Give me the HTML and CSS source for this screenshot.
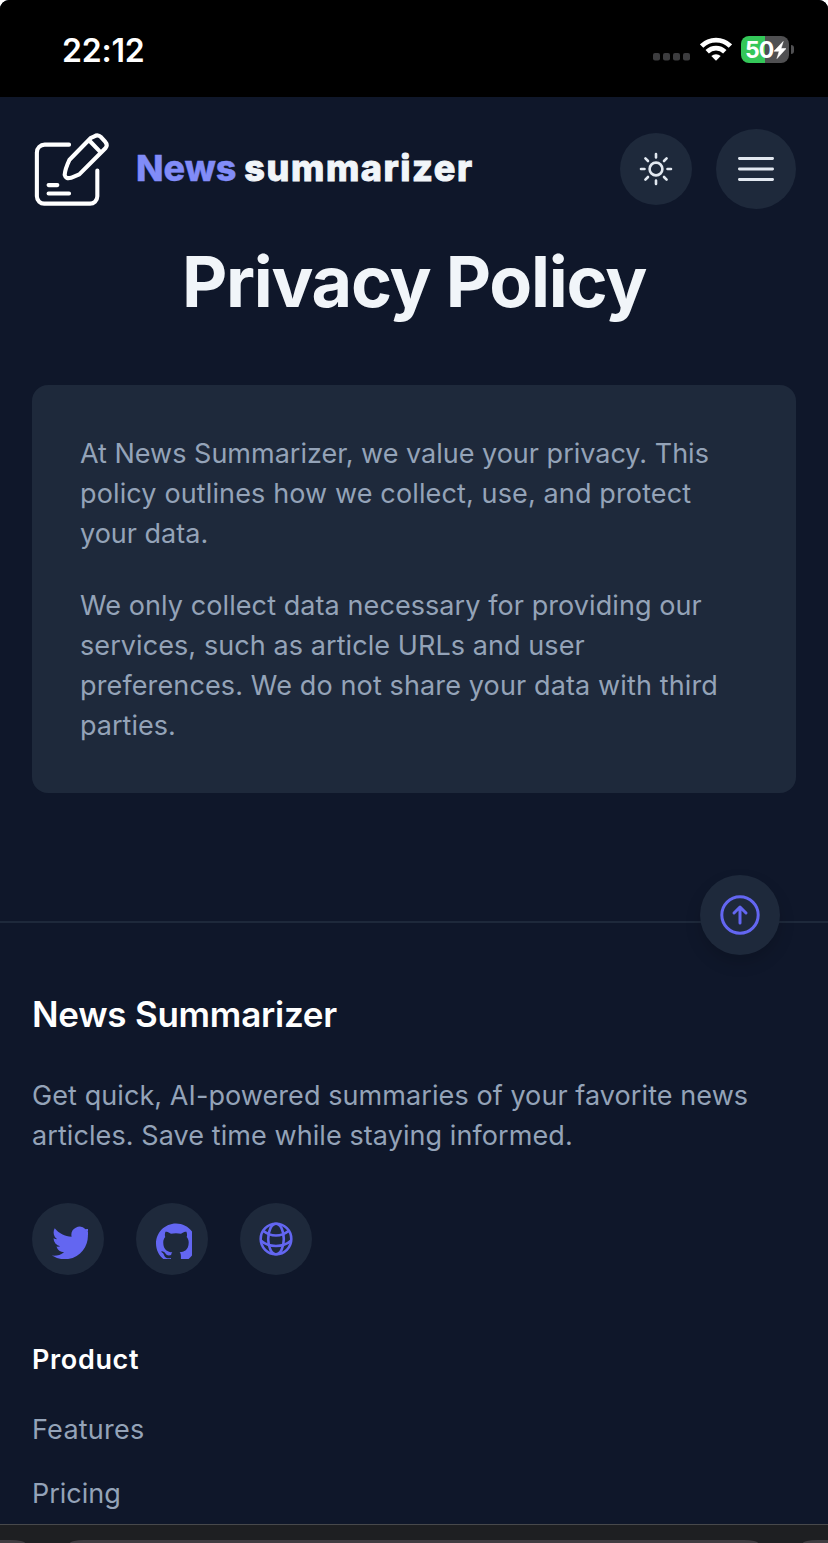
FILE: index.html
```html
<!DOCTYPE html>
<html lang="en">
<head>
<meta charset="utf-8">
<title>Privacy Policy - News Summarizer</title>
<link rel="stylesheet" href="styles.css">
</head>
<body>
<div class="screen">
  <div class="status">
    <span class="time">22:12</span>
    <svg class="signal" viewBox="0 0 38 8" width="38" height="8"><g fill="#3c3c3e"><rect x="0" y="0" width="7" height="7.4" rx="2"/><rect x="10" y="0" width="7" height="7.4" rx="2"/><rect x="20" y="0" width="7" height="7.4" rx="2"/><rect x="30" y="0" width="7" height="7.4" rx="2"/></g></svg>
    <svg class="wifi" viewBox="0 0 32 24" width="32" height="24"><g fill="none" stroke="#fff" stroke-width="4.8"><path d="M1.6 9a20.4 20.4 0 0 1 28.8 0"/><path d="M7.2 14.8a12.6 12.6 0 0 1 17.6 0"/></g><path d="M11.300 19a7 7 0 0 1 9.400 0L16 23.800z" fill="#fff"/></svg>
    <div class="battery"><span class="charge">50</span><svg viewBox="0 0 12 18" width="12" height="18"><path d="M9.200 0.500 0 10.200h5.200L3 17.500 12 7.600H7z" fill="#fff" stroke="#fff" stroke-width=".6"/></svg></div>
    <span class="nub"></span>
  </div>

  <header class="header">
    <svg class="logo" viewBox="0 0 80 80" width="78" height="78" fill="none" stroke="#fff" stroke-width="4.200" stroke-linecap="round" stroke-linejoin="round">
      <path d="M38 15H13a8 8 0 0 0-8 8v45a7.500 7.500 0 0 0 8 7.500h46a7.500 7.500 0 0 0 8-7.500V41.500"/>
      <path d="M17 56.500h9M17 65.200h21"/>
      <path d="M60.500 8 38.500 30.500Q34 40 33.500 46Q34.500 50.500 40 49L48.500 45.500 75.500 18.500Q78 15.500 75 12L71 7.500Q67.500 4 64 6.500L60.500 8ZM59 11l10.500 11"/>
    </svg>
    <div class="brand"><span class="accent">News</span> <span class="rest">summarizer</span></div>
    <button class="round theme" aria-label="Theme"><svg viewBox="-18 -18 36 36" width="36" height="36" fill="none" stroke="#e2e8f0" stroke-width="2.600" stroke-linecap="round"><circle r="6.400"/><path d="M0-15v3.500M0 11.500V15M-15 0h3.500M11.500 0H15M-10.600-10.600l2.600 2.600M8 8l2.600 2.600M-10.600 10.600l2.600-2.600M8-8l2.600-2.600"/></svg></button>
    <button class="round menu" aria-label="Menu"><svg viewBox="0 0 40 40" width="40" height="40" stroke="#e2e8f0" stroke-width="2.800" stroke-linecap="round"><path d="M3.400 9.500h33.200M3.400 20h33.200M3.400 30.500h33.200"/></svg></button>
  </header>

  <main class="main">
    <h1 class="title">Privacy Policy</h1>
    <section class="card">
      <p>At News Summarizer, we value your privacy. This<br><span class="loose">policy outlines how we collect, use, and protect</span><br>your data.</p>
      <p><span class="wide">We only collect data necessary for providing our</span><br><span class="wide">services, such as article URLs and user</span><br><span class="loose">preferences. We do not share your data with third</span><br>parties.</p>
    </section>
  </main>

  <footer class="footer">
    <button class="to-top" aria-label="Back to top"><svg viewBox="-20 -20 40 40" width="40" height="40" fill="none" stroke="#6366f1" stroke-width="3" stroke-linecap="round" stroke-linejoin="round"><circle r="18.200"/><path d="M0 8V-8M-6-2l6-6 6 6"/></svg></button>
    <h2 class="name">News Summarizer</h2>
    <p class="blurb"><span class="wide">Get quick, AI-powered summaries of your favorite news</span><br><span class="wide">articles. Save time while staying informed.</span></p>
    <div class="social">
      <a class="link bottomed"><svg viewBox="0 0 21.600 21.600" width="36" height="36" fill="#6366f1"><path d="M23.953 4.570a10 10 0 01-2.825.775 4.958 4.958 0 002.163-2.723c-.951.555-2.005.959-3.127 1.184a4.920 4.920 0 00-8.384 4.482C7.690 8.095 4.067 6.130 1.640 3.162a4.822 4.822 0 00-.666 2.475c0 1.710.870 3.213 2.188 4.096a4.904 4.904 0 01-2.228-.616v.060a4.923 4.923 0 003.946 4.827 4.996 4.996 0 01-2.212.085 4.936 4.936 0 004.604 3.417 9.867 9.867 0 01-6.102 2.105c-.390 0-.779-.023-1.170-.067a13.995 13.995 0 007.557 2.209c9.053 0 13.998-7.496 13.998-13.985 0-.210 0-.420-.015-.630A9.935 9.935 0 0024 4.590z"/></svg></a>
      <a class="link bottomed"><svg viewBox="0 0 21.600 21.600" width="36" height="36" fill="#6366f1"><path d="M12 .297c-6.630 0-12 5.373-12 12 0 5.303 3.438 9.800 8.205 11.385.600.113.820-.258.820-.577 0-.285-.010-1.040-.015-2.040-3.338.724-4.042-1.610-4.042-1.610C4.422 18.070 3.633 17.700 3.633 17.700c-1.087-.744.084-.729.084-.729 1.205.084 1.838 1.236 1.838 1.236 1.070 1.835 2.809 1.305 3.495.998.108-.776.417-1.305.760-1.605-2.665-.300-5.466-1.332-5.466-5.930 0-1.310.465-2.380 1.235-3.220-.135-.303-.540-1.523.105-3.176 0 0 1.005-.322 3.300 1.230.960-.267 1.980-.399 3-.405 1.020.006 2.040.138 3 .405 2.280-1.552 3.285-1.230 3.285-1.230.645 1.653.240 2.873.120 3.176.765.840 1.230 1.910 1.230 3.220 0 4.610-2.805 5.625-5.475 5.920.420.360.810 1.096.810 2.220 0 1.606-.015 2.896-.015 3.286 0 .315.210.690.825.570C20.565 22.092 24 17.592 24 12.297c0-6.627-5.373-12-12-12"/></svg></a>
      <a class="link"><svg viewBox="-20 -20 40 40" width="40" height="40" fill="none" stroke="#6366f1" stroke-width="2.600"><circle r="15.300"/><ellipse rx="7.800" ry="15.300"/><path d="M-12.500-8Q-7-3.500 0-3.500T12.500-8M-15.300 1.500Q-9 7 0 7T15.300 1.500"/></svg></a>
    </div>
    <h3 class="group">Product</h3>
    <ul class="links"><li class="features">Features</li><li>Pricing</li></ul>
  </footer>

  <div class="browser"><div class="tabs"><span></span><span></span><span></span></div></div>
</div>
</body>
</html>
```
FILE: styles.css
```css
* { box-sizing: border-box; margin: 0; padding: 0; }
body { background: #fff; font-family: Inter, "Open Sans", sans-serif; }
button { border: 0; }
svg { display: block; flex: none; }
.screen { height: 1543px; display: flex; flex-direction: column; background: #0f172a; border-radius: 9px 9px 0 0; overflow: hidden; }
.status { height: 97px; flex: none; display: flex; align-items: center; background: #000; padding: 2px 34px 0 62px; color: #fff; }
.time { font-size: 32px; font-weight: 600; margin-right: auto; letter-spacing: -0.2px; padding-top: 1px; }
.signal { margin: 15px 9px 0 0; }
.wifi { margin: 0 9px 1px 0; }
.battery { width: 48px; height: 27px; border-radius: 8px; background: linear-gradient(90deg, #34c759 50%, #505052 50%); display: flex; align-items: center; gap: 1px; padding-left: 4px; }
.charge { width: 28px; font-size: 23px; font-weight: 700; line-height: 27px; letter-spacing: -1px; padding-top: 1px; }
.nub { width: 3px; height: 9px; background: #505052; border-radius: 0 4px 4px 0; margin-left: 2px; }
.header { height: 144px; flex: none; padding: 0 32px; display: flex; align-items: center; }
.logo { margin-right: 26px; }
.brand { font-size: 36px; font-weight: 800; margin-right: auto; line-height: 54px; padding-bottom: 2px; white-space: nowrap; }
.accent { color: #818cf8; -webkit-text-stroke: 0.4px #818cf8; }
.rest { color: #f1f5f9; letter-spacing: 1.55px; -webkit-text-stroke: 0.9px #f1f5f9; }
.round { border-radius: 50%; background: #1e293b; display: flex; align-items: center; justify-content: center; flex: none; }
.theme { width: 72px; height: 72px; margin-right: 24px; }
.menu { width: 80px; height: 80px; }
.main { padding: 0 32px; height: 680px; flex: none; }
.title { height: 144px; text-align: center; color: #f1f5f9; font-size: 70px; line-height: 82px; font-weight: 700; letter-spacing: -1.25px; white-space: nowrap; }
.card { background: #1e293b; border-radius: 16px; padding: 49px 48px 47px; height: 408px; display: flex; flex-direction: column; gap: 32px; }
.card p, .blurb { color: #94a3b8; font-size: 27px; line-height: 40px; white-space: nowrap; }
.wide { letter-spacing: 0.08px; }
.loose { letter-spacing: 0.13px; }
.footer { position: relative; border-top: 2px solid #1e293b; height: 603px; flex: none; padding: 63px 32px 0; }
.to-top { position: absolute; top: -48px; right: 48px; width: 80px; height: 80px; border-radius: 50%; background: #1e293b; display: flex; align-items: center; justify-content: center; box-shadow: 0 8px 16px rgba(0, 0, 0, .15); }
.name { color: #fff; font-size: 35px; line-height: 56px; font-weight: 600; letter-spacing: -0.25px; }
.blurb { margin-top: 34px; }
.social { display: flex; gap: 32px; margin-top: 47px; }
.link { width: 72px; height: 72px; border-radius: 50%; background: #1e293b; display: flex; align-items: center; justify-content: center; }
.bottomed { padding: 4px 0 0 4px; }
.group { color: #fff; font-size: 27px; line-height: 40px; font-weight: 600; letter-spacing: 0.65px; margin-top: 65px; }
.links { list-style: none; display: flex; flex-direction: column; gap: 24px; margin-top: 30px; color: #94a3b8; font-size: 27px; line-height: 40px; }
.features { letter-spacing: 0.25px; }
.browser { flex: 1; background: #1e1f22; border-top: 1px solid #48494c; padding-top: 15px; overflow: hidden; }
.tabs { display: grid; grid-template-columns: 25px 1fr 25px; gap: 45px; }
.tabs span { height: 3px; background: #403d42; border-radius: 14px 14px 0 0 / 3px 3px 0 0; }
.tabs span:first-child { border-radius: 0 14px 0 0 / 0 3px 0 0; }
.tabs span:last-child { border-radius: 14px 0 0 0 / 3px 0 0 0; }
```
